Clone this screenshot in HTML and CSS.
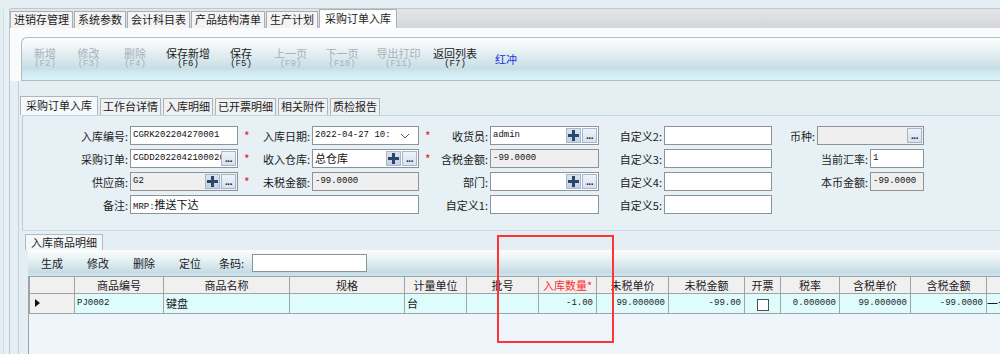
FILE: index.html
```html
<html>

<head>
  <title>采购订单入库</title>
  <link rel="stylesheet" href="styles.css">
</head>

<body>
  <div class="shell">
    <div class="side"></div>
    <div class="main">
      <div class="tabs">
        <span class="tab">进销存管理</span>
        <span class="tab">系统参数</span>
        <span class="tab">会计科目表</span>
        <span class="tab">产品结构清单</span>
        <span class="tab">生产计划</span>
        <span class="tab on">采购订单入库</span>
      </div>

      <div class="head">
        <div class="toolbar">
          <div class="tbtn off">新增<br><span class="fk">(F2)</span></div>
          <div class="tbtn off">修改<br><span class="fk">(F3)</span></div>
          <div class="tbtn off">删除<br><span class="fk">(F4)</span></div>
          <div class="tbtn">保存新增<br><span class="fk">(F6)</span></div>
          <div class="tbtn">保存<br><span class="fk">(F5)</span></div>
          <div class="tbtn off">上一页<br><span class="fk">(F9)</span></div>
          <div class="tbtn off">下一页<br><span class="fk">(F10)</span></div>
          <div class="tbtn off">导出打印<br><span class="fk">(F11)</span></div>
          <div class="tbtn">返回列表<br><span class="fk">(F7)</span></div>
          <div class="tbtn link">红冲</div>
        </div>
      </div>

      <div class="body">
        <div class="subtabs">
          <span class="stab on">采购订单入库</span>
          <span class="stab">工作台详情</span>
          <span class="stab">入库明细</span>
          <span class="stab">已开票明细</span>
          <span class="stab">相关附件</span>
          <span class="stab">质检报告</span>
        </div>

        <div class="formpanel">
          <div class="form">
            <!-- row 1 -->
            <span class="lb">入库编号:</span>
            <div class="fd"><span class="v">CGRK202204270001</span></div>
            <span class="star">*</span>
            <span class="lb">入库日期:</span>
            <div class="fd"><span class="v">2022-04-27 10:</span>
              <svg class="chev" width="10" height="6"><polyline points="1,1 5,5 9,1" fill="none" stroke="#555" stroke-width="1"/></svg>
            </div>
            <span class="star">*</span>
            <span class="lb">收货员:</span>
            <div class="fd"><span class="v">admin</span>
              <span class="bt plus"><svg width="11" height="11"><path d="M5.5 0v11M0 5.5h11" stroke="#2c4668" stroke-width="3"/></svg></span>
              <span class="bt dots">...</span>
            </div>
            <span class="lb">自定义2:</span>
            <div class="fd"></div>
            <div class="c5"><span class="lb">币种:</span>
              <div class="fd ro wide"><span class="v"></span><span class="bt dots">...</span></div>
            </div>

            <!-- row 2 -->
            <span class="lb">采购订单:</span>
            <div class="fd"><span class="v">CGDD2022042100020</span><span class="bt dots">...</span></div>
            <span class="star">*</span>
            <span class="lb">收入仓库:</span>
            <div class="fd"><span class="v cj">总仓库</span>
              <span class="bt plus"><svg width="11" height="11"><path d="M5.5 0v11M0 5.5h11" stroke="#2c4668" stroke-width="3"/></svg></span>
              <span class="bt dots">...</span>
            </div>
            <span class="star">*</span>
            <span class="lb">含税金额:</span>
            <div class="fd ro"><span class="v">-99.0000</span></div>
            <span class="lb">自定义3:</span>
            <div class="fd"></div>
            <div class="c5"><span class="lb">当前汇率:</span>
              <div class="fd small"><span class="v">1</span></div>
            </div>

            <!-- row 3 -->
            <span class="lb">供应商:</span>
            <div class="fd ro"><span class="v">G2</span>
              <span class="bt plus"><svg width="11" height="11"><path d="M5.5 0v11M0 5.5h11" stroke="#2c4668" stroke-width="3"/></svg></span>
              <span class="bt dots">...</span>
            </div>
            <span class="star">*</span>
            <span class="lb">未税金额:</span>
            <div class="fd ro"><span class="v">-99.0000</span></div>
            <span></span>
            <span class="lb">部门:</span>
            <div class="fd"><span class="v"></span>
              <span class="bt plus"><svg width="11" height="11"><path d="M5.5 0v11M0 5.5h11" stroke="#2c4668" stroke-width="3"/></svg></span>
              <span class="bt dots">...</span>
            </div>
            <span class="lb">自定义4:</span>
            <div class="fd"></div>
            <div class="c5"><span class="lb">本币金额:</span>
              <div class="fd ro small"><span class="v">-99.0000</span></div>
            </div>

            <!-- row 4 -->
            <span class="lb">备注:</span>
            <div class="fd span4"><span class="v">MRP:<span class="cj">推送下达</span></span></div>
            <span></span>
            <span class="lb">自定义1:</span>
            <div class="fd"></div>
            <span class="lb">自定义5:</span>
            <div class="fd"></div>
            <span></span>
          </div>
        </div>

        <div class="detail">
          <div class="dtab">入库商品明细</div>
          <div class="dtool">
            <span class="it">生成</span>
            <span class="it">修改</span>
            <span class="it">删除</span>
            <span class="it">定位</span>
            <span class="cond">条码:</span>
            <span class="code"></span>
          </div>
          <div class="grid">
            <table>
              <colgroup>
                <col><col><col><col><col><col><col><col><col><col><col><col><col><col>
              </colgroup>
              <tr class="hd">
                <th></th><th>商品编号</th><th>商品名称</th><th>规格</th><th>计量单位</th><th>批号</th>
                <th class="req">入库数量*</th><th>未税单价</th><th>未税金额</th><th>开票</th><th>税率</th>
                <th>含税单价</th><th>含税金额</th><th></th>
              </tr>
              <tr class="row">
                <td class="rh"><svg width="5" height="8"><polygon points="0,0 5,4 0,8" fill="#111"/></svg></td>
                <td class="m">PJ0002</td>
                <td>键盘</td>
                <td></td>
                <td>台</td>
                <td></td>
                <td class="n">-1.00</td>
                <td class="n">99.000000</td>
                <td class="n">-99.00</td>
                <td class="c"><span class="cb"></span></td>
                <td class="n">0.000000</td>
                <td class="n">99.000000</td>
                <td class="n">-99.0000</td>
                <td class="last">一合</td>
              </tr>
            </table>
          </div>
        </div>
      </div>
    </div>
    <div class="mark"></div>
  </div>
</body>

</html>
```

FILE: styles.css
```css
body {
  margin: 0;
  background: #e4eef3;
  font-family: "Noto Sans CJK SC", "Liberation Sans", sans-serif;
  font-size: 11px;
  color: #1b1b1b;
}

.shell {
  position: relative;
  display: flex;
  height: 354px;
  overflow: hidden;
}

.side {
  flex: none;
  width: 9px;
  margin-top: 9px;
  border-right: 1px solid #b4c8d4;
  background: linear-gradient(to right, #e4edf2 0 3px, #cddfe9 3px 4px, #e9f1f5 4px);
}

.main {
  flex: 1;
  min-width: 0;
}

/* top tabs */
.tabs {
  display: flex;
  align-items: flex-end;
  height: 19px;
  margin-top: 8px;
  border-top: 1px solid #c2c7cb;
  background: linear-gradient(#e3e5e7, #d4d7da);
}

.tab {
  box-sizing: border-box;
  height: 17px;
  line-height: 15px;
  padding: 0 3px;
  margin-right: 1px;
  background: #f4f4f4;
  border: 1px solid #a9afb4;
  border-bottom: none;
  white-space: nowrap;
}

.tab.on {
  height: 19px;
  line-height: 17px;
  padding: 0 5px;
  background: #fdfdfd;
}

/* main toolbar */
.head {
  background: #f9fbfc;
  padding: 9px 0 0 11px;
}

.toolbar {
  display: grid;
  grid-template-columns: 44px 43px 50px 56px 50px 49px 54px 59px 54px 48px;
  align-items: center;
  height: 42px;
  padding-left: 1px;
  border: 1px solid #b3bcc1;
  border-right: none;
  border-radius: 6px 0 0 0;
  background: linear-gradient(#fdfefe 0%, #eef5f7 22%, #c8dee5 72%, #d3edf5 86%, #daf3fb 100%);
}

.tbtn {
  text-align: center;
  line-height: 11px;
  white-space: nowrap;
}

.tbtn .fk {
  font-family: "Liberation Mono", monospace;
  font-size: 9px;
}

.off {
  color: #a7b3b8;
}

.link {
  color: #1a30e6;
}

/* body */
.body {
  margin-left: 8px;
  border-left: 1px solid #bfd2dd;
  padding: 15px 0 0 1px;
  height: 300px;
}

.subtabs {
  display: flex;
  align-items: flex-end;
  height: 19px;
}

.stab {
  box-sizing: border-box;
  height: 17px;
  line-height: 15px;
  padding: 0 2px;
  margin-right: 2px;
  background: #eff1f2;
  border: 1px solid #aeb5ba;
  border-bottom: none;
  white-space: nowrap;
}

.stab.on {
  height: 19px;
  line-height: 17px;
  padding: 0 5px;
  background: #f6f9fb;
}

.formpanel {
  margin-left: 2px;
  border-top: 1px solid #bcd6e4;
  border-left: 1px solid #b7c9d3;
  border-bottom: 1px solid #c7dbe6;
  padding: 10px 0 16px 0;
  background: #e6f0f5;
}

.form {
  display: grid;
  grid-template-columns: 107px 108px 18px 56px 107px 18px 53px 109px 65px 108px 152px;
  grid-auto-rows: 19px;
  row-gap: 4px;
  align-items: center;
}

.lb {
  text-align: right;
  padding-right: 2px;
  white-space: nowrap;
}

.star {
  color: #e52222;
  font-size: 12px;
  padding-left: 6px;
}

.fd {
  box-sizing: border-box;
  height: 19px;
  border: 1px solid #8d9499;
  background: #fff;
  display: flex;
  align-items: flex-start;
}

.fd.ro {
  background: #efefef;
}

.fd.span4 {
  grid-column: span 4;
}

.fd .v {
  flex: 1;
  min-width: 0;
  overflow: hidden;
  white-space: nowrap;
  padding: 2px 0 0 2px;
  font-family: "Liberation Mono", monospace;
  font-size: 9px;
  line-height: 12px;
  color: #111;
}

.fd .v.cj,
.fd .cj {
  font-family: "Noto Sans CJK SC", sans-serif;
  font-size: 11px;
  line-height: 12px;
}

.chev {
  margin: 6px 8px 0 0;
}

.c5 {
  display: flex;
  justify-content: flex-end;
  align-items: center;
}

.c5 .wide {
  width: 107px;
}

.c5 .small {
  width: 54px;
}

.bt {
  box-sizing: border-box;
  flex: none;
  width: 15px;
  height: 15px;
  margin: 1px 1px 0 0;
  border: 1px solid #a6b7cd;
  display: flex;
  align-items: center;
  justify-content: center;
}

.bt.plus {
  background: linear-gradient(#dbe4f0, #c3d1e4);
}

.bt.dots {
  background: linear-gradient(#eef3f9, #d6e1ef);
  font-family: "Liberation Sans", sans-serif;
  font-size: 10px;
  font-weight: bold;
  line-height: 9px;
  align-items: flex-end;
  padding-bottom: 2px;
  color: #1c2433;
  letter-spacing: -0.5px;
}

/* detail grid */
.detail {
  margin: 3px 0 0 5px;
}

.dtab {
  box-sizing: border-box;
  width: max-content;
  height: 16px;
  line-height: 14px;
  padding: 0 5px;
  border: 1px solid #b3babf;
  border-bottom: none;
  background: #f3f7f9;
}

.dtool {
  margin-left: 3px;
  height: 26px;
  display: flex;
  align-items: center;
  background: linear-gradient(#fdfefe 0%, #e8f2f5 35%, #c6dce4 85%, #cfe5ed 100%);
}

.dtool .it {
  padding: 0 12px;
}

.dtool .it:first-child {
  margin-left: 1px;
}

.cond {
  margin-left: 6px;
}

.code {
  box-sizing: border-box;
  margin-left: 8px;
  width: 115px;
  height: 18px;
  border: 1px solid #8d9499;
  background: #fff;
}

.grid {
  margin-left: 3px;
  border-top: 1px solid #9aa3a8;
  border-left: 1px solid #9aa3a8;
  background: #eef6fb;
  height: 90px;
}

table {
  border-collapse: collapse;
  table-layout: fixed;
  width: 1017px;
  font-size: 11px;
}

col:nth-child(1) { width: 45px; }
col:nth-child(2) { width: 89px; }
col:nth-child(3) { width: 126px; }
col:nth-child(4) { width: 115px; }
col:nth-child(5) { width: 62px; }
col:nth-child(6) { width: 72px; }
col:nth-child(7) { width: 58px; }
col:nth-child(8) { width: 72px; }
col:nth-child(9) { width: 76px; }
col:nth-child(10) { width: 36px; }
col:nth-child(11) { width: 59px; }
col:nth-child(12) { width: 71px; }
col:nth-child(13) { width: 76px; }
col:nth-child(14) { width: 60px; }

th {
  height: 16px;
  padding: 0;
  font-weight: normal;
  line-height: 14px;
  background: #f0f0f0;
  border: 1px solid #a3a3a3;
  border-top: none;
  white-space: nowrap;
  overflow: hidden;
}

th.req {
  color: #ff2b2b;
}

td {
  height: 20px;
  padding: 0 2px;
  line-height: 14px;
  background: #dffcfd;
  border: 1px solid #a3a3a3;
  white-space: nowrap;
  overflow: hidden;
}

td.rh {
  background: #f0f0f0;
  padding-left: 5px;
}

td.last {
  padding: 0;
}

td.m {
  font-family: "Liberation Mono", monospace;
  font-size: 9px;
}

td.n {
  text-align: right;
  padding-right: 3px;
  font-family: "Liberation Mono", monospace;
  font-size: 9px;
}

td.c {
  text-align: center;
}

.cb {
  display: inline-block;
  box-sizing: border-box;
  width: 12px;
  height: 12px;
  margin-top: 3px;
  border: 1px solid #505050;
  background: #fff;
}

/* annotation box drawn over the grid */
.mark {
  position: absolute;
  left: 497px;
  top: 235px;
  width: 117px;
  height: 108px;
  box-sizing: border-box;
  border: 2px solid #ff3535;
}
```
